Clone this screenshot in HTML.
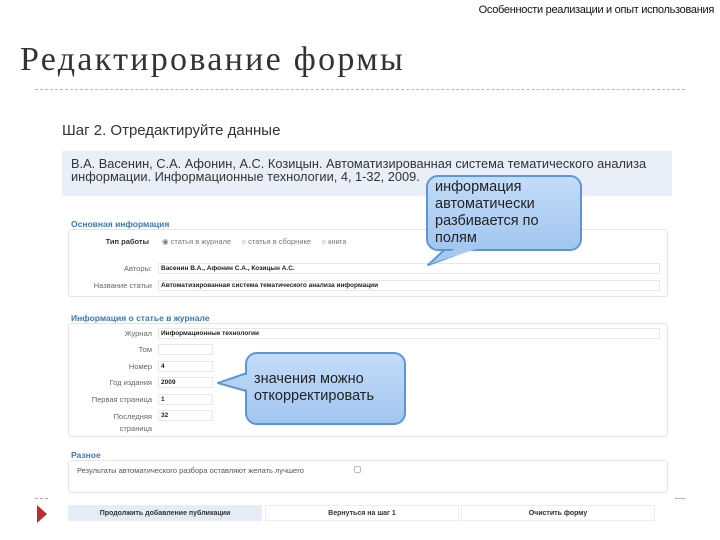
<!DOCTYPE html>
<html><head><meta charset="utf-8">
<style>
*{margin:0;padding:0;box-sizing:border-box}
body{width:720px;height:540px;background:#fff;position:relative;overflow:hidden;font-family:"Liberation Sans","DejaVu Sans",sans-serif;color:#222}
.a{position:absolute;white-space:nowrap}
.hdr{right:6px;top:4px;font-size:11px;color:#111;letter-spacing:-0.3px}
.title{left:20px;top:41px;font-family:"Liberation Serif","DejaVu Serif",serif;font-size:34px;color:#333;letter-spacing:2.3px}
.dash{left:35px;top:89px;width:650px;border-top:1px dashed #d8a8b0}
.step{left:62px;top:122px;font-size:15px;color:#333}
.cite{left:62px;top:151px;width:610px;height:45px;background:#e8eff8;padding:6px 0 0 9px;font-size:12.8px;line-height:13px;color:#333}
.fs{position:absolute;left:68px;width:600px;border:1px solid #e4e4e4;border-radius:3px;background:#fff}
.lg{position:absolute;font-size:8.5px;font-weight:bold;color:#3b78b8;background:#fff;padding-right:3px}
.lb{position:absolute;font-size:7.5px;color:#666;text-align:right;width:84px}
.in{position:absolute;height:11px;border:1px solid #e8e8e8;font-size:6.5px;font-weight:bold;padding:1px 2px;color:#222}
.btn{position:absolute;top:505px;height:16px;font-size:7px;font-weight:bold;text-align:center;line-height:16px;color:#333;border:1px solid #eee}
.call{position:absolute;background:linear-gradient(#c3dcf8,#a2c6f0);border:2px solid #5d96d6;border-radius:12px;font-size:14.5px;line-height:17px;color:#222;padding:2px 7px}
</style></head><body>
<div class="a hdr">Особенности реализации и опыт использования</div>
<div class="a title">Редактирование формы</div>
<div class="a dash"></div>
<div class="a step">Шаг 2. Отредактируйте данные</div>
<div class="a cite">В.А. Васенин, С.А. Афонин, А.С. Козицын. Автоматизированная система тематического анализа<br>информации. Информационные технологии, 4, 1-32, 2009.</div>

<div class="fs" style="top:229px;height:68px"></div>
<div class="lg" style="left:71px;top:219px">Основная информация</div>
<div class="lb" style="left:65px;top:237px;font-weight:bold;color:#333">Тип работы</div>
<div class="a" style="left:162px;top:237px;font-size:7.5px;color:#777">◉ статья в журнале &nbsp;&nbsp;&nbsp; ○ статья в сборнике &nbsp;&nbsp;&nbsp; ○ книга</div>
<div class="lb" style="left:68px;top:264px">Авторы:</div>
<div class="in" style="left:158px;top:263px;width:502px">Васенин В.А., Афонин С.А., Козицын А.С.</div>
<div class="lb" style="left:68px;top:281px">Название статьи</div>
<div class="in" style="left:158px;top:280px;width:502px">Автоматизированная система тематического анализа информации</div>

<div class="fs" style="top:323px;height:114px"></div>
<div class="lg" style="left:71px;top:313px">Информация о статье в журнале</div>
<div class="lb" style="left:68px;top:329px">Журнал</div>
<div class="in" style="left:158px;top:328px;width:502px">Информационные технологии</div>
<div class="lb" style="left:68px;top:345px">Том</div>
<div class="in" style="left:158px;top:344px;width:55px"></div>
<div class="lb" style="left:68px;top:362px">Номер</div>
<div class="in" style="left:158px;top:361px;width:55px">4</div>
<div class="lb" style="left:68px;top:378px">Год издания</div>
<div class="in" style="left:158px;top:377px;width:55px">2009</div>
<div class="lb" style="left:68px;top:395px">Первая страница</div>
<div class="in" style="left:158px;top:394px;width:55px">1</div>
<div class="lb" style="left:68px;top:411px;line-height:12px">Последняя<br>страница</div>
<div class="in" style="left:158px;top:410px;width:55px">32</div>

<div class="fs" style="top:460px;height:33px"></div>
<div class="lg" style="left:71px;top:450px">Разное</div>
<div class="a" style="left:77px;top:466px;font-size:7.5px;color:#555">Результаты автоматического разбора оставляют желать лучшего</div>
<div class="a" style="left:354px;top:466px;width:7px;height:7px;border:1px solid #bbb;border-radius:2px"></div>

<div class="a" style="left:35px;top:498px;width:13px;border-top:1px dashed #c9a0a8"></div>
<div class="a" style="left:675px;top:498px;width:10px;border-top:1px dashed #c9a0a8"></div>
<svg class="a" style="left:36px;top:504px" width="12" height="20"><path d="M1 1 L11 10 L1 19Z" fill="#b8302e"/></svg>
<div class="btn" style="left:68px;width:194px;background:#e4ecf8">Продолжить добавление публикации</div>
<div class="btn" style="left:265px;width:194px">Вернуться на шаг 1</div>
<div class="btn" style="left:461px;width:194px">Очистить форму</div>

<svg class="a" style="left:0;top:0" width="720" height="540">
<path d="M455 240 L428 265 L485 244Z" fill="#a6c9f1" stroke="#5d96d6" stroke-width="2" stroke-linejoin="round"/>
<path d="M250 372 L218 383 L250 392Z" fill="#b9d6f6" stroke="#5d96d6" stroke-width="2" stroke-linejoin="round"/>
</svg>
<div class="call" style="left:426px;top:175px;width:156px;height:76px">информация<br>автоматически<br>разбивается по<br>полям</div>
<div class="call" style="left:245px;top:352px;width:161px;height:73px;padding-top:17px;font-size:14.5px">значения можно<br>откорректировать</div>
<svg class="a" style="left:0;top:0" width="720" height="540">
<path d="M458 247 L429 264 L483 247Z" fill="#a6c9f1"/>
<path d="M249 374 L221 383 L249 390Z" fill="#b4d2f4"/>
</svg>
</body></html>
